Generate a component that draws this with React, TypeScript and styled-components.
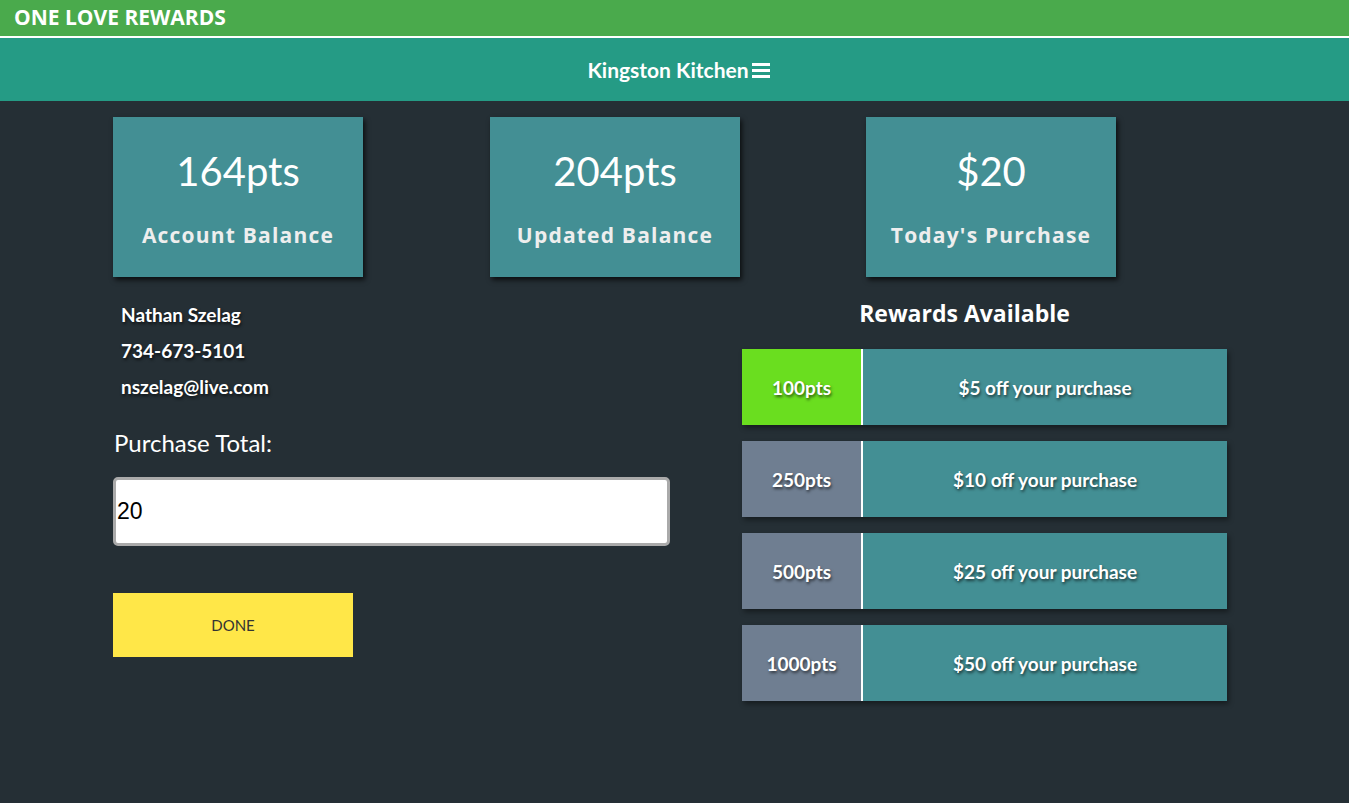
import styled, { createGlobalStyle } from "styled-components";

const GlobalStyle = createGlobalStyle`
  html, body {
    margin: 0;
    padding: 0;
    background: #252f35;
    font-family: Lato, "Open Sans", sans-serif;
  }
  * {
    box-sizing: border-box;
  }
`;

const Page = styled.div`
  min-height: 803px;
  background: #252f35;
`;

const TopBar = styled.div`
  height: 38px;
  background: #4aaa4c;
  border-bottom: 2px solid #fff;
  padding: 3px 0 0 14px;
  color: #fff;
  font-family: "Open Sans", "Noto Sans", sans-serif;
  font-weight: 700;
  font-size: 21px;
  line-height: 28px;
`;

const NavBar = styled.div`
  height: 63px;
  background: #259b85;
  display: flex;
  align-items: center;
  justify-content: center;
  gap: 3px;
  color: #fff;
  font-weight: 700;
  font-size: 21px;
  padding-left: 8px;
`;

const Main = styled.div`
  width: 1131px;
  margin-left: 113px;
  padding-top: 16px;
`;

const Cards = styled.div`
  display: grid;
  grid-template-columns: 377px 376px 250px;
`;

const Card = styled.div`
  width: 250px;
  height: 160px;
  background: #438f94;
  box-shadow: 2px 3px 5px rgba(0, 0, 0, 0.7);
  display: flex;
  flex-direction: column;
  align-items: center;
  color: #fff;
`;

const CardValue = styled.div`
  font-size: 40px;
  line-height: 48px;
  margin-top: 30px;
`;

const CardLabel = styled.div`
  font-family: "Open Sans", "Noto Sans", sans-serif;
  font-weight: 700;
  font-size: 21px;
  letter-spacing: 1.2px;
  color: #eee;
  margin-top: 26px;
`;

const Columns = styled.div`
  display: flex;
  margin-top: 20px;
`;

const LeftCol = styled.div`
  width: 557px;
  display: flex;
  flex-direction: column;
`;

const Info = styled.div`
  padding-left: 8px;
  color: #fff;
  font-weight: 700;
  font-size: 19px;
  line-height: 36px;
  text-shadow: 1px 2px 3px rgba(0, 0, 0, 0.6);
`;

const Label = styled.div`
  color: #fff;
  font-size: 24px;
  line-height: 30px;
  margin-top: 23px;
  padding-left: 1px;
`;

const Input = styled.input`
  margin-top: 19px;
  width: 557px;
  height: 69px;
  border: 3px solid #aaa;
  border-radius: 5px;
  background: #fff;
  font-family: "Liberation Sans", Arial, sans-serif;
  font-size: 23px;
  padding: 0 0 0 1px;
  color: #000;
  outline: none;
`;

const DoneButton = styled.button`
  margin-top: 47px;
  width: 240px;
  height: 64px;
  border: none;
  background: #ffe748;
  color: #333;
  font-family: Lato, sans-serif;
  font-size: 15px;
  cursor: pointer;
`;

const RightCol = styled.div`
  margin-left: 72px;
  width: 485px;
  display: flex;
  flex-direction: column;
  gap: 16px;
`;

const Heading = styled.div`
  color: #fff;
  font-family: "Open Sans", "Noto Sans", sans-serif;
  font-weight: 700;
  font-size: 23px;
  text-align: center;
  padding-right: 40px;
  line-height: 32px;
  margin-bottom: 4px;
`;

const Reward = styled.div`
  display: flex;
  height: 76px;
  box-shadow: 2px 3px 5px rgba(0, 0, 0, 0.4);
  color: #fff;
  font-weight: 700;
  font-size: 19px;
  text-shadow: 1px 2px 3px rgba(0, 0, 0, 0.6);
`;

const Points = styled.div<{ $active?: boolean }>`
  width: 121px;
  background: ${(p) => (p.$active ? "#6ade1f" : "#6f7e91")};
  border-right: 2px solid #fff;
  display: flex;
  align-items: center;
  justify-content: center;
`;

const Offer = styled.div`
  flex: 1;
  background: #438f94;
  display: flex;
  align-items: center;
  justify-content: center;
`;

const rewards = [
  { pts: "100pts", text: "$5 off your purchase", active: true },
  { pts: "250pts", text: "$10 off your purchase" },
  { pts: "500pts", text: "$25 off your purchase" },
  { pts: "1000pts", text: "$50 off your purchase" },
];

function Burger() {
  return (
    <svg width="18" height="16" viewBox="0 0 18 16">
      <rect x="0" y="1" width="18" height="3" fill="#fff" />
      <rect x="0" y="7" width="18" height="3" fill="#fff" />
      <rect x="0" y="13" width="18" height="3" fill="#fff" />
    </svg>
  );
}

export default function App() {
  return (
    <Page>
      <GlobalStyle />
      <TopBar>ONE LOVE REWARDS</TopBar>
      <NavBar>
        Kingston Kitchen <Burger />
      </NavBar>
      <Main>
        <Cards>
          <Card>
            <CardValue>164pts</CardValue>
            <CardLabel>Account Balance</CardLabel>
          </Card>
          <Card>
            <CardValue>204pts</CardValue>
            <CardLabel>Updated Balance</CardLabel>
          </Card>
          <Card>
            <CardValue>$20</CardValue>
            <CardLabel>Today's Purchase</CardLabel>
          </Card>
        </Cards>
        <Columns>
          <LeftCol>
            <Info>
              <div>Nathan Szelag</div>
              <div>734-673-5101</div>
              <div>nszelag@live.com</div>
            </Info>
            <Label>Purchase Total:</Label>
            <Input defaultValue="20" />
            <DoneButton>DONE</DoneButton>
          </LeftCol>
          <RightCol>
            <Heading>Rewards Available</Heading>
            {rewards.map((r) => (
              <Reward key={r.pts}>
                <Points $active={r.active}>{r.pts}</Points>
                <Offer>{r.text}</Offer>
              </Reward>
            ))}
          </RightCol>
        </Columns>
      </Main>
    </Page>
  );
}
